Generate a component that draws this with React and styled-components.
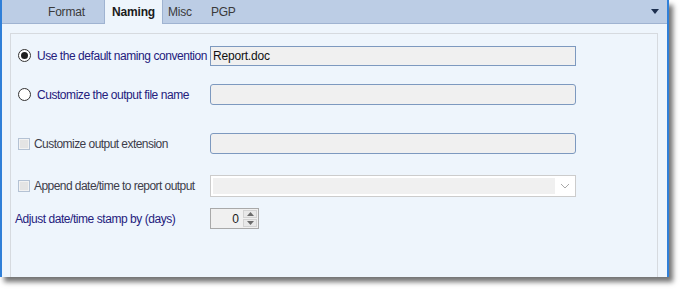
import React from 'react'
import styled, { createGlobalStyle } from 'styled-components';

const GlobalStyle = createGlobalStyle`
    html, body {
        margin: 0;
        padding: 0;
        background: #ffffff;
    }
    body {
        width: 682px;
        height: 292px;
        overflow: hidden;
        font-family: "Liberation Sans", Arial, sans-serif;
    }
`;

const App = () => {
    return (
        <>
            <GlobalStyle />
            <Window>
                <TabBar>
                    <Tab width={62} pad="0 0 0 6px" align="flex-start">Format</Tab>
                    <Tab active width={59}>Naming</Tab>
                    <Tab pad="0 10px 0 5px">Misc</Tab>
                    <Tab pad="0 8px 0 9px">PGP</Tab>
                    <MenuArrow />
                </TabBar>
                <Content>
                    <GroupBox>
                        <Row top={11}>
                            <Option>
                                <Radio checked />
                                <Label>Use the default naming convention</Label>
                            </Option>
                            <TextBox>Report.doc</TextBox>
                        </Row>
                        <Row top={18}>
                            <Option>
                                <Radio />
                                <Label>Customize the output file name</Label>
                            </Option>
                            <TextBox rounded />
                        </Row>
                        <Row top={28}>
                            <Option check>
                                <Check />
                                <Label muted>Customize output extension</Label>
                            </Option>
                            <TextBox rounded />
                        </Row>
                        <Row top={21}>
                            <Option check>
                                <Check />
                                <Label muted>Append date/time to report output</Label>
                            </Option>
                            <Combo>
                                <ComboField />
                                <ComboButton>
                                    <svg width="10" height="6" viewBox="0 0 10 6">
                                        <path d="M1 1 L5 5 L9 1" fill="none" stroke="#a9a9a9" strokeWidth="1" />
                                    </svg>
                                </ComboButton>
                            </Combo>
                        </Row>
                        <Row top={12}>
                            <Option plain>
                                <Label>Adjust date/time stamp by (days)</Label>
                            </Option>
                            <Spinner>
                                <SpinValue>0</SpinValue>
                                <SpinButtons>
                                    <SpinButton>
                                        <svg width="7" height="4" viewBox="0 0 7 4">
                                            <path d="M0 4 L3.5 0 L7 4 Z" fill="#6b6b6b" />
                                        </svg>
                                    </SpinButton>
                                    <SpinButton>
                                        <svg width="7" height="4" viewBox="0 0 7 4">
                                            <path d="M0 0 L3.5 4 L7 0 Z" fill="#6b6b6b" />
                                        </svg>
                                    </SpinButton>
                                </SpinButtons>
                            </Spinner>
                        </Row>
                    </GroupBox>
                </Content>
            </Window>
        </>
    )
}

export default App;

const Window = styled.div`
    width: 669px;
    height: 277px;
    display: flex;
    flex-direction: column;
    border-left: 2px solid #2f7fd8;
    border-right: 2px solid #2f7fd8;
    box-sizing: border-box;
    background-color: #eef5fc;
    box-shadow: 4px 5px 5px rgba(0, 0, 0, 0.55);
`;

const TabBar = styled.div`
    height: 24px;
    flex-shrink: 0;
    display: flex;
    align-items: stretch;
    padding-left: 40px;
    background-color: #bccde5;
    border-bottom: 1px solid #9fb3d1;
    box-sizing: border-box;
    position: relative;
`;

// tabs: fixed width when given, otherwise sized by padding
const Tab = styled.div`
    width: ${({ width }) => width ? `${width}px` : 'auto'};
    box-sizing: border-box;
    padding: ${({ pad }) => pad || '0'};
    display: flex;
    align-items: center;
    justify-content: ${({ align }) => align || 'center'};
    font-size: 12px;
    letter-spacing: -0.2px;
    color: ${({ active }) => active ? '#1b1b1b' : '#3a3a3a'};
    font-weight: ${({ active }) => active ? 'bold' : 'normal'};
    background-color: ${({ active }) => active ? '#eef5fc' : 'transparent'};
    border-left: ${({ active }) => active ? '1px solid #9fb3d1' : 'none'};
    border-right: ${({ active }) => active ? '1px solid #9fb3d1' : 'none'};
    margin-bottom: ${({ active }) => active ? '-1px' : '0'};
`;

const MenuArrow = styled.div`
    position: absolute;
    right: 8px;
    top: 9px;
    width: 0;
    height: 0;
    border-left: 4px solid transparent;
    border-right: 4px solid transparent;
    border-top: 5px solid #1d2f4f;
`;

const Content = styled.div`
    flex: 1;
    display: flex;
    padding: 9px 9px 0 8px;
`;

const GroupBox = styled.div`
    flex: 1;
    border: 1px solid #d6dadf;
    border-bottom: none;
    display: flex;
    flex-direction: column;
    padding-left: 2px;
`;

const Row = styled.div`
    display: grid;
    grid-template-columns: 197px 366px;
    align-items: center;
    height: 21px;
    margin-top: ${({ top }) => top}px;
`;

const Option = styled.div`
    display: flex;
    align-items: center;
    gap: ${({ check }) => check ? '4px' : '6px'};
    padding-left: ${({ plain }) => plain ? '2px' : '5px'};
`;

const Label = styled.span`
    font-size: 12px;
    letter-spacing: ${({ muted }) => muted ? '-0.55px' : '-0.45px'};
    white-space: nowrap;
    color: ${({ muted }) => muted ? '#3d3d4a' : '#24207c'};
`;

const Radio = styled.span`
    width: 11px;
    height: 11px;
    border-radius: 50%;
    border: 1px solid #333333;
    background-color: #ffffff;
    flex-shrink: 0;
    display: flex;
    align-items: center;
    justify-content: center;

    &::after {
        content: '';
        width: 7px;
        height: 7px;
        border-radius: 50%;
        background-color: ${({ checked }) => checked ? '#1f1f1f' : 'transparent'};
    }
`;

const Check = styled.span`
    width: 10px;
    height: 10px;
    border: 1px solid #b4c2d4;
    background-color: #e4e4e4;
    box-shadow: inset 0 0 0 1px #f2f2f2;
    flex-shrink: 0;
`;

const TextBox = styled.div`
    height: ${({ rounded }) => rounded ? '21px' : '20px'};
    box-sizing: border-box;
    border: 1px solid #7d99bf;
    border-radius: ${({ rounded }) => rounded ? '3px' : '0'};
    background-color: #f0f0f0;
    font-size: 12px;
    color: #111111;
    display: flex;
    align-items: center;
    padding-left: 2px;
    letter-spacing: -0.2px;
`;

const Combo = styled.div`
    height: 22px;
    box-sizing: border-box;
    border: 1px solid #cccccc;
    background-color: #ffffff;
    display: flex;
    align-items: stretch;
    padding: 2px 0 2px 2px;
`;

const ComboField = styled.div`
    flex: 1;
    background-color: #f0f0f0;
`;

const ComboButton = styled.div`
    width: 20px;
    display: flex;
    align-items: center;
    justify-content: center;
`;

const Spinner = styled.div`
    width: 49px;
    height: 21px;
    box-sizing: border-box;
    border: 1px solid #a9a9a9;
    background-color: #f0f0f0;
    display: flex;
    align-items: stretch;
`;

const SpinValue = styled.div`
    flex: 1;
    display: flex;
    align-items: center;
    justify-content: flex-end;
    padding-right: 4px;
    font-size: 12px;
    color: #1a1a1a;
`;

const SpinButtons = styled.div`
    width: 14px;
    display: flex;
    flex-direction: column;
    padding: 1px 1px 1px 0;
    gap: 1px;
`;

const SpinButton = styled.div`
    flex: 1;
    background-color: #e8e8e8;
    border: 1px solid #d2d2d2;
    display: flex;
    align-items: center;
    justify-content: center;
`;
